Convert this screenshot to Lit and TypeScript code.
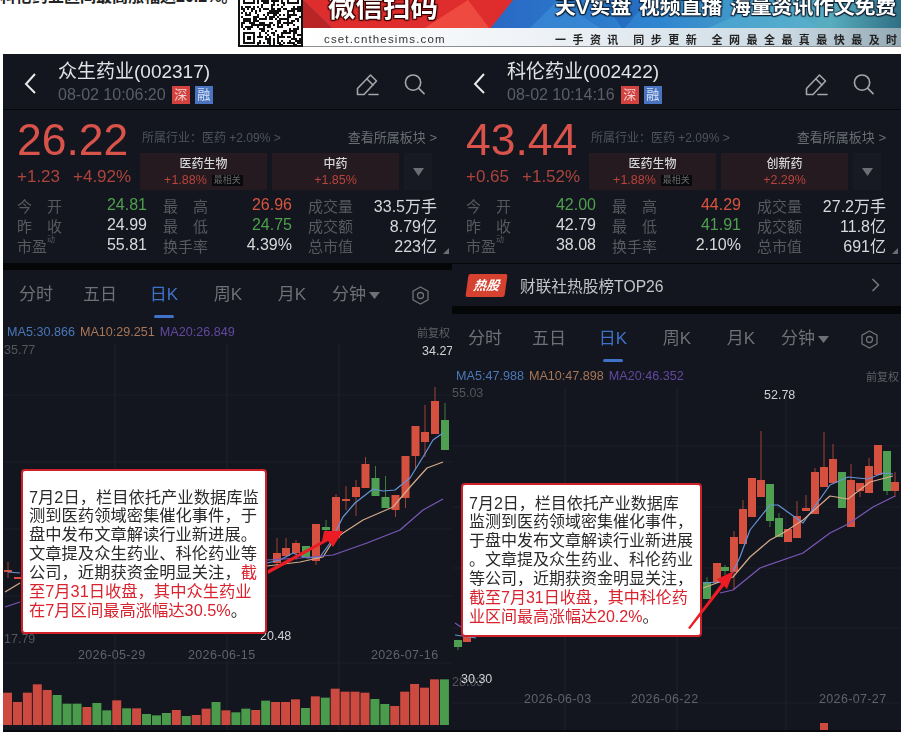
import { LitElement, html, css, svg, nothing } from "lit";
import { customElement, property } from "lit/decorators.js";

type Candle = [number, number, number, number, number, "r" | "g"];
type Pt = [number, number];
type Part = { t: string; red?: boolean };
interface StockData {
  name: string; time: string; price: string; ch: string; pct: string;
  sector2: string; sector2pct: string; stats: [string, string, string, string, string][];
  hot: boolean;
  ma: [string, string, string];
  originX: number; originY: number; chartH: number;
  vgrid: number[]; hgrid: number[];
  candles: Candle[]; blue: Pt[][]; tan: Pt[][]; purple: Pt[][];
  vols: [number, "r" | "g"][]; volBase: number;
  labels: [number, number, string, string, string?][];
  box: { x: number; y: number; w: number; h: number; px: number; pl: number; fs: number; lines: Part[][] };
  arrow: string;
}

const redT = (t: string): Part => ({ t, red: true });
const t = (s: string): Part => ({ t: s });

const volTops: [number, "r" | "g"][] = [
  [488, "r"], [516, "r"], [488, "r"], [463, "r"], [480, "r"], [495, "g"], [521, "g"], [521, "g"], [531, "r"], [519, "g"],
  [541, "g"], [511, "r"], [535, "g"], [535, "r"], [552, "g"], [556, "g"], [549, "g"], [540, "r"], [558, "g"], [555, "r"],
  [536, "r"], [516, "g"], [541, "r"], [547, "g"], [536, "g"], [540, "r"], [512, "g"], [516, "r"], [516, "r"], [508, "r"],
  [534, "g"], [499, "r"], [503, "g"], [476, "r"], [485, "r"], [485, "r"], [488, "r"], [507, "g"], [522, "g"], [528, "r"],
  [485, "r"], [462, "r"], [473, "r"], [448, "r"], [448, "g"],
];

const LEFT: StockData = {
  name: "众生药业(002317)", time: "08-02 10:06:20", price: "26.22", ch: "+1.23", pct: "+4.92%",
  sector2: "中药", sector2pct: "+1.85%", hot: false,
  stats: [
    ["今|开", "24.81", "g", "最|高", "26.96"],
    ["昨|收", "24.99", "w", "最|低", "24.75"],
    ["市盈^", "55.81", "w", "换手率", "4.39%"],
  ],
  ma: ["MA5:30.866", "MA10:29.251", "MA20:26.849"],
  originX: 3, originY: 344, chartH: 386,
  vgrid: [115, 227, 339], hgrid: [395, 462, 529, 596, 663],
  candles: [
    [445, 420, 450, 403, 450, "g"], [435, 401, 434, 387, 434, "r"], [425, 432, 442, 405, 457, "r"],
    [415.5, 426, 456, 426, 470, "r"], [405.5, 456, 498, 456, 508, "r"], [395.5, 495, 510, 495, 517, "r"],
    [385.5, 497, 508, 476, 508, "g"], [375.5, 478, 496, 466, 496, "g"], [365.5, 464, 488, 457, 488, "r"],
    [356, 487, 497, 480, 516, "r"], [346, 499, 501, 486, 510, "r"], [336, 497, 538, 494, 538, "r"],
    [326, 527, 530, 520, 533, "g"], [316, 524, 561, 524, 565, "r"], [306, 546, 558, 546, 558, "g"],
    [296, 543, 553, 540, 560, "r"], [286, 548, 556, 538, 556, "r"], [277, 553, 563, 538, 566, "r"],
    [8, 570, 572, 562, 578, "r"], [18, 577, 579, 577, 579, "r"],
  ],
  blue: [
    [[8, 572], [20, 573]],
    [[267, 563], [280, 560], [293, 553], [307, 558], [320, 557], [330, 543], [343, 517], [355, 503], [373, 489], [383, 491], [395, 490], [410, 478], [423, 457], [433, 440], [443, 433]],
  ],
  tan: [
    [[5, 592], [20, 583]],
    [[267, 566], [300, 562], [323, 557], [333, 541], [343, 533], [363, 520], [393, 507], [410, 487], [427, 468], [443, 462]],
  ],
  purple: [
    [[5, 607], [20, 602]],
    [[267, 560], [300, 558], [333, 555], [367, 543], [400, 530], [423, 510], [443, 499]],
  ],
  vols: volTops, volBase: 725,
  labels: [
    [4, 354, "35.77", "dim"], [422, 355, "34.27", "bright"], [4, 643, "17.79", "dim"], [260, 640, "20.48", "bright"],
    [78, 659, "2026-05-29", "date"], [188, 659, "2026-06-15", "date"], [371, 659, "2026-07-16", "date"],
  ],
  box: {
    x: 21, y: 469, w: 246, h: 165, px: 16.5, pl: 6, fs: 16.3,
    lines: [
      [t("7月2日，栏目依托产业数据库监")],
      [t("测到医药领域密集催化事件，于")],
      [t("盘中发布文章解读行业新进展。")],
      [t("文章提及众生药业、科伦药业等")],
      [t("公司，近期获资金明显关注，"), redT("截")],
      [redT("至7月31日收盘，其中众生药业")],
      [redT("在7月区间最高涨幅达30.5%"), t("。")],
    ],
  },
  arrow: "268,570 322,541 324,531 343,531 333,547 328,541 268,574",
};

const RIGHT: StockData = {
  name: "科伦药业(002422)", time: "08-02 10:14:16", price: "43.44", ch: "+0.65", pct: "+1.52%",
  sector2: "创新药", sector2pct: "+2.29%", hot: true,
  stats: [
    ["今|开", "42.00", "g", "最|高", "44.29"],
    ["昨|收", "42.79", "w", "最|低", "41.91"],
    ["市盈^", "38.08", "w", "换手率", "2.10%"],
  ],
  ma: ["MA5:47.988", "MA10:47.898", "MA20:46.352"],
  originX: 452, originY: 388, chartH: 342,
  vgrid: [565, 677, 786], hgrid: [446, 507, 568, 628, 703],
  candles: [
    [895, 482, 491, 472, 497, "r"], [887, 451, 491, 451, 495, "g"], [878, 445, 475, 445, 475, "r"],
    [869, 466, 493, 458, 493, "r"], [860, 483, 491, 483, 497, "r"], [851, 480, 527, 464, 527, "r"],
    [842, 472, 508, 472, 508, "g"], [833, 459, 483, 444, 483, "r"], [824, 467, 487, 432, 487, "r"],
    [815, 472, 514, 468, 514, "r"], [806, 508, 511, 495, 511, "r"], [797, 516, 538, 501, 538, "r"],
    [788, 529, 542, 529, 542, "r"], [779, 518, 537, 513, 537, "g"], [770, 484, 521, 484, 527, "g"],
    [761, 480, 497, 431, 497, "r"], [752, 478, 517, 478, 517, "r"], [743, 509, 544, 500, 544, "r"],
    [734, 537, 572, 531, 590, "r"], [725, 567, 571, 565, 575, "g"], [717, 563, 582, 563, 582, "r"],
    [707, 582, 599, 577, 599, "g"], [458, 640, 647, 640, 650, "g"], [467, 637, 642, 637, 642, "r"],
  ],
  blue: [
    [[455, 635], [476, 638]],
    [[703, 583], [720, 582], [733, 572], [740, 557], [750, 530], [770, 505], [778, 505], [803, 523], [830, 485], [848, 477], [868, 479], [883, 473], [893, 474]],
  ],
  tan: [
    [[703, 588], [733, 577], [750, 557], [770, 540], [783, 533], [803, 520], [830, 496], [848, 499], [870, 482], [893, 476]],
  ],
  purple: [
    [[455, 623], [461, 627]],
    [[720, 593], [733, 590], [760, 568], [803, 553], [830, 533], [848, 524], [873, 507], [895, 496]],
  ],
  vols: [], volBase: 732,
  labels: [
    [452, 397, "55.03", "dim"], [764, 399, "52.78", "bright"], [452, 686, "28.03", "dim"], [461, 683, "30.30", "bright"],
    [524, 703, "2026-06-03", "date"], [631, 703, "2026-06-22", "date"], [819, 703, "2026-07-27", "date"],
  ],
  box: {
    x: 461, y: 483, w: 241, h: 154, px: 9.5, pl: 6, fs: 16,
    lines: [
      [t("7月2日，栏目依托产业数据库")],
      [t("监测到医药领域密集催化事件，")],
      [t("于盘中发布文章解读行业新进展")],
      [t("。文章提及众生药业、科伦药业")],
      [t("等公司，近期获资金明显关注，")],
      [redT("截至7月31日收盘，其中科伦药")],
      [redT("业区间最高涨幅达20.2%"), t("。")],
    ],
  },
  arrow: "688,628 721,584 717,579 734,571 727,589 724,586 690,629",
};

@customElement("stock-panel")
class StockPanel extends LitElement {
  @property({ attribute: false }) data!: StockData;

  static styles = css`
    :host { display: flex; flex-direction: column; width: 449px; height: 678px; background: #13161e; border-bottom: 2px solid #08090c; box-sizing: border-box; overflow: hidden; color: #777; filter: blur(.35px); }
    .nav { height: 55px; border-bottom: 1px solid #07080b; display: flex; align-items: flex-start; flex: none; }
    .back { width: 16px; height: 24px; margin: 18px 0 0 20px; }
    .head { margin-left: 19px; flex: 1; }
    .title { font-size: 19px; line-height: 26px; margin-top: 5px; color: #e2e3e5; white-space: nowrap; }
    .sub { display: flex; align-items: center; margin-top: 1px; height: 18px; }
    .time { font-size: 16px; color: #5a5e66; margin-right: 6px; white-space: nowrap; }
    .tag { width: 18px; height: 18px; font-size: 13px; line-height: 18px; text-align: center; color: #f0d0d0; }
    .tag.s { background: #d2423f; margin-right: 5px; }
    .tag.r { background: #4a74c0; color: #d8e2f4; }
    .ico { margin-top: 19px; flex: none; }
    .pen { margin-right: 25px; }
    .mag { margin-top: 20px; margin-right: 27px; }
    .quote { padding: 0 0 7px; flex: none; }
    .qtop { display: flex; height: 80px; }
    .qleft { width: 137px; padding-left: 14px; box-sizing: border-box; }
    .price { font-size: 44.5px; line-height: 40px; margin-top: 10px; color: #d9534a; white-space: nowrap; }
    .change { font-size: 17px; line-height: 20px; margin-top: 7px; color: #ad443c; display: flex; gap: 13px; white-space: nowrap; }
    .qright { flex: 1; }
    .ind { display: flex; justify-content: space-between; height: 20px; margin-top: 18px; line-height: 20px; padding: 0 15px 0 2px; white-space: nowrap; }
    .ind1 { font-size: 12px; color: #4f535b; }
    .ind2 { font-size: 13px; color: #6b6e75; }
    .cards { display: flex; gap: 5px; margin-top: 5px; }
    .card { width: 127px; height: 37px; background: #241a1f; text-align: center; }
    .card .a { font-size: 12px; font-weight: 500; line-height: 15px; margin-top: 4px; color: #d4d5d7; }
    .card .b { display: flex; justify-content: center; align-items: center; gap: 5px; font-size: 12.5px; line-height: 15px; margin-top: 1px; color: #b8443c; }
    .badge { background: #08090c; color: #666; font-size: 9px; line-height: 11px; padding: 0 2px; }
    .more { width: 28px; height: 37px; background: #171a22; display: flex; align-items: center; justify-content: center; }
    .stats { display: grid; grid-template-columns: 130px 129px 129px; column-gap: 16px; padding-left: 14px; margin-top: 5px; margin-bottom: 1px; grid-auto-rows: 20px; position: relative; }
    .cell { display: flex; justify-content: space-between; align-items: center; white-space: nowrap; }
    .lab { display: flex; justify-content: space-between; width: 45px; font-size: 15px; color: #565960; }
    .lab.free { justify-content: flex-start; }
    .lab sup { font-size: 8px; line-height: 8px; align-self: flex-start; margin-top: 1px; }
    .val { font-size: 16px; color: #d8d9db; }
    .val.g { color: #4f9f4f; }
    .val.r { color: #d9543f; }
    .corner { position: absolute; left: 440px; top: 53px; width: 6px; height: 6px; }
    .gap { height: 7px; background: #050608; flex: none; }
    .thin { height: 1px; background: #050608; flex: none; }
    .hot { height: 42px; display: flex; align-items: center; flex: none; }
    .hotb { width: 39px; height: 23px; margin-left: 15px; background: #d6422f; transform: skewX(-8deg); color: #fff; font-size: 13px; font-weight: 700; font-style: italic; line-height: 23px; text-align: center; border-radius: 2px; }
    .hott { margin-left: 14px; font-size: 15.7px; color: #c4c5c8; flex: 1; white-space: nowrap; }
    .hotc { margin-right: 21px; }
    .gap2 { height: 8px; background: #050608; flex: none; }
    .tabs { height: 50px; display: grid; grid-template-columns: repeat(7, 64px); padding-left: 1px; flex: none; }
    .tab { display: flex; flex-direction: column; align-items: center; padding-top: 15px; box-sizing: border-box; font-size: 17px; color: #6d7077; }
    .tab .tx { line-height: 20px; height: 20px; display: flex; align-items: center; gap: 3px; white-space: nowrap; }
    .tab.on { color: #3f72c8; }
    .tab .bar { width: 20px; height: 3px; margin-top: 10px; background: #3f72c8; border-radius: 2px; }
    .maRow { height: 24px; display: flex; align-items: center; font-size: 12.6px; gap: 5px; padding: 0 2px 0 4px; flex: none; white-space: nowrap; }
    .m1 { color: #4a78b8; } .m2 { color: #a87658; } .m3 { color: #6448a0; }
    .fq { margin-left: auto; font-size: 11px; color: #5d6067; }
    .chart { flex: 1; position: relative; min-height: 0; }
    .chart svg { position: absolute; left: 0; top: 0; display: block; }
    .box { position: absolute; box-sizing: border-box; background: #fff; border: 2px solid #d0202a; border-radius: 4px; color: #2a2a2a; line-height: 18.9px; white-space: nowrap; }
    .red { color: #d9232e; }
    .lbl { font-size: 12.5px; font-family: "Liberation Sans", sans-serif; }
    .dim { fill: #53565d; } .bright { fill: #d0d1d3; } .date { fill: #5f626a; letter-spacing: .35px; }
  `;

  line(pts: Pt[]) { return pts.map((p) => p.join(",")).join(" "); }

  renderChart(d: StockData) {
    const vb = `${d.originX} ${d.originY} 449 ${d.chartH}`;
    return html`<div class="chart">
      <svg width="449" height=${d.chartH} viewBox=${vb}>
        ${d.vgrid.map((x) => svg`<line x1=${x} x2=${x} y1=${d.originY} y2=${d.originY + d.chartH} stroke="#20232b" stroke-width="1"/>`)}
        ${d.hgrid.map((y) => svg`<line x1=${d.originX} x2=${d.originX + 449} y1=${y} y2=${y} stroke="#1c1f27" stroke-width="1"/>`)}
        ${d.vols.map(([top, c], i) => {
          const y = 530 + top / 3;
          return svg`<rect x=${3 + 9.93 * i} y=${y} width="9" height=${d.volBase - y} fill=${c === "r" ? "#cc4a3f" : "#4a9c4c"}/>`;
        })}
        ${!d.vols.length ? svg`<rect x="820" y="723" width="8" height="9" fill="#cc4a3f"/>` : nothing}
        ${d.candles.map(([x, a, b, w1, w2, c]) => {
          const col = c === "r" ? "#d5503f" : "#4f9f52";
          return svg`<line x1=${x} x2=${x} y1=${w1} y2=${w2} stroke=${col} stroke-opacity=".75" stroke-width="1"/>
            <rect x=${x - 4} y=${a} width="8" height=${b - a} fill=${col}/>`;
        })}
        ${d.blue.map((p) => svg`<polyline points=${this.line(p)} fill="none" stroke="#6694d6" stroke-width="1.2" stroke-linejoin="round"/>`)}
        ${d.tan.map((p) => svg`<polyline points=${this.line(p)} fill="none" stroke="#d6ab8c" stroke-width="1.2" stroke-linejoin="round"/>`)}
        ${d.purple.map((p) => svg`<polyline points=${this.line(p)} fill="none" stroke="#7a58b8" stroke-width="1.2" stroke-linejoin="round"/>`)}
        ${d.labels.map(([x, y, s, c]) => svg`<text x=${x} y=${y} class="lbl ${c}">${s}</text>`)}
      </svg>
      <div class="box" style="left:${d.box.x - d.originX}px;top:${d.box.y - d.originY}px;width:${d.box.w}px;height:${d.box.h}px;padding:${d.box.px}px 0 0 ${d.box.pl}px;font-size:${d.box.fs}px">
        ${d.box.lines.map((l) => html`<div>${l.map((p) => html`<span class=${p.red ? "red" : ""}>${p.t}</span>`)}</div>`)}
      </div>
      <svg width="449" height=${d.chartH} viewBox=${vb}><polygon points=${d.arrow} fill="#ec1c24"/></svg>
    </div>`;
  }

  renderLab(s: string) {
    if (s.includes("|")) { const [a, b] = s.split("|"); return html`<span class="lab"><span>${a}</span><span>${b}</span></span>`; }
    if (s.endsWith("^")) return html`<span class="lab free"><span>${s.slice(0, -1)}</span><sup>动</sup></span>`;
    return html`<span class="lab"><span>${s}</span></span>`;
  }

  render() {
    const d = this.data;
    const thirdCol = d.hot
      ? [["成交量", "27.2万手"], ["成交额", "11.8亿"], ["总市值", "691亿"]]
      : [["成交量", "33.5万手"], ["成交额", "8.79亿"], ["总市值", "223亿"]];
    const secCls = ["r", "g", "w"];
    return html`
      <div class="nav">
        <svg class="back" viewBox="0 0 16 24"><polyline points="12,2 3,12 12,21" fill="none" stroke="#e8e8e8" stroke-width="2"/></svg>
        <div class="head">
          <div class="title">${d.name}</div>
          <div class="sub"><span class="time">${d.time}</span><span class="tag s">深</span><span class="tag r">融</span></div>
        </div>
        <svg class="ico pen" width="23" height="23" viewBox="0 0 23 23" fill="none" stroke="#a4a5a9" stroke-width="1.6" stroke-linejoin="round" stroke-linecap="round">
          <path d="M1.5 21.5v-6L14.5 2l6 6L8 21.5z"/><path d="M11 6l6 6"/><path d="M13 21.5h9"/>
        </svg>
        <svg class="ico mag" width="21" height="21" viewBox="0 0 22 22" fill="none" stroke="#a4a5a9" stroke-width="1.7" stroke-linecap="round">
          <circle cx="9.5" cy="9" r="8"/><path d="M15.5 15l5.5 5.5"/>
        </svg>
      </div>
      <div class="quote">
        <div class="qtop">
          <div class="qleft">
            <div class="price">${d.price}</div>
            <div class="change"><span>${d.ch}</span><span>${d.pct}</span></div>
          </div>
          <div class="qright">
            <div class="ind"><span class="ind1">所属行业：医药 +2.09% &gt;</span><span class="ind2">查看所属板块 &gt;</span></div>
            <div class="cards">
              <div class="card"><div class="a">医药生物</div><div class="b"><span>+1.88%</span><span class="badge">最相关</span></div></div>
              <div class="card"><div class="a">${d.sector2}</div><div class="b"><span>${d.sector2pct}</span></div></div>
              <div class="more"><svg width="11" height="8" viewBox="0 0 11 8"><polygon points="0,0 11,0 5.5,8" fill="#6b6e75"/></svg></div>
            </div>
          </div>
        </div>
        <div class="stats">
          ${d.stats.map((r, i) => html`
            <div class="cell">${this.renderLab(r[0])}<span class="val ${r[2]}">${r[1]}</span></div>
            <div class="cell">${this.renderLab(r[3])}<span class="val ${secCls[i]}">${r[4]}</span></div>
            <div class="cell"><span class="lab"><span>${thirdCol[i][0]}</span></span><span class="val">${thirdCol[i][1]}</span></div>
          `)}
          <svg class="corner" viewBox="0 0 6 6"><polygon points="6,0 6,6 0,6" fill="#6b6e75"/></svg>
        </div>
      </div>
      ${d.hot
        ? html`<div class="thin"></div>
            <div class="hot">
              <div class="hotb">热股</div><div class="hott">财联社热股榜TOP26</div>
              <svg class="hotc" width="9" height="14" viewBox="0 0 9 14"><polyline points="1.5,1 7.5,7 1.5,13" fill="none" stroke="#77797f" stroke-width="1.5"/></svg>
            </div><div class="gap2"></div>`
        : html`<div class="gap"></div>`}
      <div class="tabs">
        ${["分时", "五日", "日K", "周K", "月K"].map((s, i) => html`<div class="tab ${i === 2 ? "on" : ""}"><span class="tx">${s}</span>${i === 2 ? html`<span class="bar"></span>` : nothing}</div>`)}
        <div class="tab"><span class="tx">分钟<svg width="11" height="7" viewBox="0 0 11 7"><polygon points="0,0 11,0 5.5,7" fill="#6d7077"/></svg></span></div>
        <div class="tab"><span class="tx"><svg width="17" height="19" viewBox="0 0 17 19" fill="none" stroke="#6d7077" stroke-width="1.3"><polygon points="8.5,1 16,5.2 16,13.8 8.5,18 1,13.8 1,5.2"/><circle cx="8.5" cy="9.5" r="3"/></svg></span></div>
      </div>
      <div class="maRow"><span class="m1">${d.ma[0]}</span><span class="m2">${d.ma[1]}</span><span class="m3">${d.ma[2]}</span><span class="fq">前复权</span></div>
      ${this.renderChart(d)}
    `;
  }
}

function qrPath(): string {
  const n = 30;
  let seed = 12345;
  const rnd = () => { seed = (seed * 1103515245 + 12345) & 0x7fffffff; return seed / 0x7fffffff; };
  let p = "";
  for (let y = 0; y < 23; y++) {
    for (let x = 0; x < n; x++) {
      const inFinder = (x < 8 && y >= 15) || (x < 8 && y < 3) || (x >= n - 8 && y < 3);
      if (!inFinder && rnd() > 0.5) p += `M${x} ${y}h1v1h-1z`;
    }
  }
  return p;
}

@customElement("app-root")
export class AppRoot extends LitElement {
  static styles = css`
    :host { display: block; width: 901px; height: 732px; overflow: hidden; background: #fff; font-family: "Liberation Sans", "Noto Sans CJK SC", sans-serif; }
    .top { display: flex; height: 54px; flex: none; }
    .lead { width: 238px; height: 47px; overflow: hidden; font-size: 16px; font-weight: 700; color: #222; flex: none; }
    .lead div { margin-top: -13px; line-height: 20px; white-space: nowrap; }
    .qr { width: 65px; height: 47px; display: block; flex: none; }
    .banner { position: relative; width: 598px; height: 47px; overflow: hidden; flex: none; filter: blur(.3px); }
    .bgsvg { position: absolute; left: 0; top: 0; display: block; }
    .row { position: relative; display: flex; white-space: nowrap; }
    .r1 { height: 30px; }
    .r2 { height: 17px; align-items: center; }
    .big { width: 252px; flex: none; padding-left: 25px; box-sizing: border-box; font-size: 27.5px; line-height: 30px; margin-top: -7px; font-weight: 700; color: #fff; text-shadow: 0 0 2px #300, 1px 1px 1px #300, -1px -1px 1px #300, 1px -1px 1px #300, -1px 1px 1px #300; }
    .vtxt { font-size: 20.8px; line-height: 24px; margin-top: -5px; font-weight: 700; color: #fff; text-shadow: 0 0 2px #123, 1px 1px 1px #123, -1px 1px 1px #123, 1px -1px 1px #123; word-spacing: 2px; }
    .site { width: 252px; flex: none; padding-left: 21px; box-sizing: border-box; font-size: 11.5px; letter-spacing: 1.15px; color: #333; }
    .sl { font-size: 11px; font-weight: 700; letter-spacing: 6.45px; word-spacing: -1px; color: #222; }
    .panels { display: flex; padding-left: 3px; }
  `;

  render() {
    return html`
      <div class="top">
        <div class="lead"><div>科伦药业区间最高涨幅达20.2%。</div></div>
        <svg class="qr" viewBox="0 0 65 47" shape-rendering="crispEdges">
          <rect width="65" height="47" fill="#111"/>
          <rect x="2" y="0" width="61" height="45" fill="#fff"/>
          <g transform="translate(2.5 0) scale(2)"><path d=${qrPath()} fill="#111"/>
            <path d="M1 16h6v6H1zM2 17v4h4v-4z" fill-rule="evenodd" fill="#111"/><rect x="3" y="18" width="2" height="2" fill="#111"/>
            <rect x="0" y="0" width="8" height="3" fill="#fff"/><rect x="1" y="0" width="6" height="2" fill="#111"/><rect x="2" y="0" width="4" height="1" fill="#fff"/>
            <rect x="22" y="0" width="8" height="3" fill="#fff"/><rect x="23" y="0" width="6" height="2" fill="#111"/><rect x="24" y="0" width="4" height="1" fill="#fff"/>
          </g>
        </svg>
        <div class="banner">
          <svg class="bgsvg" width="598" height="47" viewBox="0 0 598 47">
            <defs>
              <linearGradient id="bl" x1="0" x2="1" y1="0" y2="0">
                <stop offset="0.3" stop-color="#2867c4"/><stop offset="0.6" stop-color="#2f86d0"/><stop offset="0.88" stop-color="#58aebf"/><stop offset="1" stop-color="#2f6f84"/>
              </linearGradient>
              <linearGradient id="wh" x1="0" x2="1" y1="0" y2="0">
                <stop offset="0" stop-color="#ffffff"/><stop offset="0.4" stop-color="#eef2f6"/><stop offset="0.8" stop-color="#cddbe4"/><stop offset="1" stop-color="#93a9b4"/>
              </linearGradient>
            </defs>
            <rect width="598" height="30" fill="url(#bl)"/>
            <polygon points="225,30 255,0 300,30" fill="#3d8fd8" opacity=".6"/>
            <polygon points="300,0 345,0 320,30" fill="#1f5fb8" opacity=".55"/>
            <polygon points="400,30 470,0 520,30" fill="#5ab4d8" opacity=".45"/>
            <polygon points="0,0 210,0 187,29 30,29" fill="#de2d2c"/>
            <polygon points="0,0 30,29 0,29" fill="#b92525"/>
            <polygon points="120,29 165,0 187,29" fill="#ef4a3f"/>
            <rect y="28" width="598" height="19" fill="url(#wh)"/>
            <rect y="46" width="598" height="1" fill="#8b8f94"/>
          </svg>
          <div class="row r1"><div class="big">微信扫码</div><div class="vtxt">天V实盘 视频直播 海量资讯作文免费</div></div>
          <div class="row r2"><div class="site">cset.cnthesims.com</div><div class="sl">一手资讯 同步更新 全网最全最真最快最及时</div></div>
        </div>
      </div>
      <div class="panels">
        <stock-panel .data=${LEFT}></stock-panel>
        <stock-panel .data=${RIGHT}></stock-panel>
      </div>
    `;
  }
}
